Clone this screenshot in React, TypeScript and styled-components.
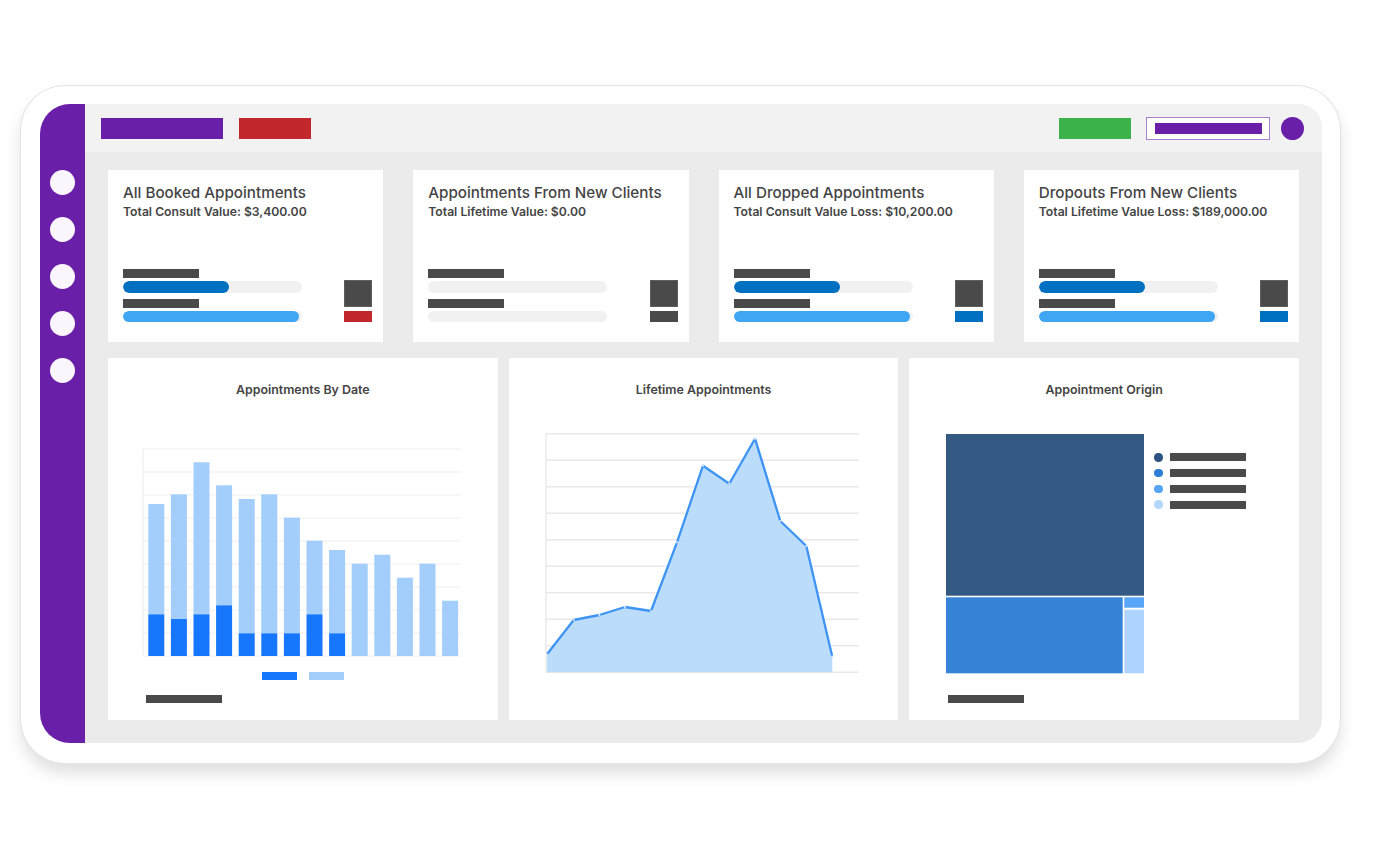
import React from 'react';
import styled, { createGlobalStyle } from 'styled-components';

const GlobalStyle = createGlobalStyle`
  html, body { margin: 0; padding: 0; background: #ffffff; }
  body { font-family: Inter, "Liberation Sans", sans-serif; -webkit-font-smoothing: antialiased; }
  #root { width: 1392px; height: 849px; }
`;

const Page = styled.div`
  width: 1392px;
  height: 849px;
  box-sizing: border-box;
  padding: 86px 0 0 21px;
  background: #ffffff;
  overflow: hidden;
`;

const Device = styled.div`
  width: 1319px;
  height: 677px;
  box-sizing: border-box;
  padding: 18px 18px 20px 19px;
  background: #ffffff;
  border-radius: 44px;
  box-shadow: 0 0 0 1px #e4e4e4, 0 10px 16px rgba(0, 0, 0, 0.13);
`;

const Screen = styled.div`
  display: flex;
  height: 100%;
  border-radius: 30px 24px 24px 30px;
  overflow: hidden;
`;

const Sidebar = styled.nav`
  width: 45px;
  flex: none;
  box-sizing: border-box;
  background: #6a1fa8;
  display: flex;
  flex-direction: column;
  align-items: center;
  padding-top: 66px;
  gap: 22px;
`;

const NavDot = styled.span`
  width: 25px;
  height: 25px;
  border-radius: 50%;
  background: #fbf6fd;
`;

const Main = styled.div`
  flex: 1;
  min-width: 0;
  display: flex;
  flex-direction: column;
  background: #ebebeb;
`;

const TopBar = styled.header`
  height: 48px;
  flex: none;
  background: #f2f2f2;
  display: flex;
  align-items: center;
  justify-content: space-between;
  padding: 0 18px 0 16px;
`;

const BarGroup = styled.div<{ $gap: number }>`
  display: flex;
  align-items: center;
  gap: ${(p) => p.$gap}px;
`;

const Block = styled.span<{ $w: number; $c: string }>`
  display: block;
  width: ${(p) => p.$w}px;
  height: 21px;
  background: ${(p) => p.$c};
`;

const OutlineButton = styled.span`
  width: 124px;
  height: 23px;
  box-sizing: border-box;
  border: 1px solid #a781d0;
  background: #ffffff;
  display: flex;
  align-items: center;
  justify-content: center;
  margin-right: -4px;
`;

const OutlineInner = styled.span`
  width: 107px;
  height: 11px;
  background: #6a1fa8;
`;

const Avatar = styled.span`
  width: 23px;
  height: 23px;
  border-radius: 50%;
  background: #6a1fa8;
`;

const Content = styled.div`
  flex: 1;
  display: flex;
  flex-direction: column;
  gap: 16px;
  padding: 18px 23px 23px 23px;
`;

const CardsRow = styled.div`
  display: grid;
  grid-template-columns: repeat(4, 1fr);
  gap: 30px;
  height: 172px;
`;

const Card = styled.section`
  background: #ffffff;
  box-sizing: border-box;
  padding: 14px 11px 20px 15px;
  display: flex;
  flex-direction: column;
  justify-content: space-between;
`;

const CardTitle = styled.h2`
  margin: 0;
  font-size: 15.2px;
  line-height: 18px;
  font-weight: 500;
  color: #444444;
  white-space: nowrap;
`;

const CardSub = styled.p`
  margin: 2px 0 0;
  font-size: 12.2px;
  line-height: 16px;
  font-weight: 600;
  color: #444444;
  white-space: nowrap;
`;

const CardBottom = styled.div`
  display: flex;
  align-items: flex-end;
  justify-content: space-between;
`;

const Meters = styled.div`
  width: 179px;
  display: flex;
  flex-direction: column;
`;

const Label = styled.span<{ $mt?: number }>`
  display: block;
  width: 76px;
  height: 9px;
  background: #4a4a4a;
  margin-top: ${(p) => p.$mt ?? 0}px;
`;

const Track = styled.div`
  margin-top: 3px;
  height: 11.5px;
  border-radius: 6px;
  background: #f1f1f1;
  overflow: hidden;
`;

const Fill = styled.div<{ $c: string }>`
  height: 100%;
  border-radius: 6px;
  background: ${(p) => p.$c};
`;

const Swatches = styled.div`
  display: flex;
  flex-direction: column;
  gap: 4px;
  width: 28px;
`;

const Square = styled.span`
  display: block;
  height: 27px;
  background: #4a4a4a;
  box-shadow: inset 0 0 0 1px #5e5e5e;
`;

const Strip = styled.span<{ $c: string }>`
  display: block;
  height: 11px;
  background: ${(p) => p.$c};
`;

const ChartsRow = styled.div`
  display: grid;
  grid-template-columns: repeat(3, 1fr);
  gap: 11px;
  flex: 1;
`;

const Panel = styled.section`
  background: #ffffff;
  padding-top: 25px;
  display: flex;
  flex-direction: column;
`;

const ChartTitle = styled.h3`
  margin: 0;
  font-size: 12.4px;
  line-height: 14px;
  font-weight: 600;
  color: #444444;
  text-align: center;
`;

const ChartSvg = styled.svg`
  display: block;
  flex: none;
`;

const LegendRow = styled.div`
  display: flex;
  justify-content: center;
  gap: 12px;
  margin-top: 13.5px;
`;

const LegendKey = styled.span<{ $c: string }>`
  width: 35px;
  height: 8px;
  background: ${(p) => p.$c};
`;

const Placeholder = styled.span<{ $mt: number; $ml: number }>`
  display: block;
  width: 76px;
  height: 8px;
  background: #4a4a4a;
  margin-top: ${(p) => p.$mt}px;
  margin-left: ${(p) => p.$ml}px;
`;

const TreeBody = styled.div`
  display: flex;
  margin-top: 37px;
  padding-left: 37px;
`;

const TreeLegend = styled.ul`
  list-style: none;
  margin: 0 0 0 10px;
  padding: 19px 0 0;
  display: flex;
  flex-direction: column;
  gap: 7.3px;
`;

const TreeItem = styled.li`
  display: flex;
  align-items: center;
  gap: 7px;
  height: 8.5px;
`;

const Dot = styled.span<{ $c: string }>`
  width: 8.5px;
  height: 8.5px;
  border-radius: 50%;
  background: ${(p) => p.$c};
`;

const ItemBar = styled.span`
  width: 76px;
  height: 8px;
  background: #4a4a4a;
`;

type CardData = {
  title: string;
  sub: string;
  fills: [number, number];
  strip: string;
};

const cards: CardData[] = [
  { title: 'All Booked Appointments', sub: 'Total Consult Value: $3,400.00', fills: [59, 98.5], strip: '#c1272d' },
  { title: 'Appointments From New Clients', sub: 'Total Lifetime Value: $0.00', fills: [0, 0], strip: '#4a4a4a' },
  { title: 'All Dropped Appointments', sub: 'Total Consult Value Loss: $10,200.00', fills: [59.5, 98.5], strip: '#0070c0' },
  { title: 'Dropouts From New Clients', sub: 'Total Lifetime Value Loss: $189,000.00', fills: [59.5, 98.5], strip: '#0070c0' },
];

const barTotals = [152, 161.7, 193.7, 170.7, 157, 161.7, 138.3, 115.3, 106, 92.3, 101.3, 78.3, 92.3, 55.3];
const barDark = [41.7, 37, 41.7, 50.7, 22.7, 22.7, 22.7, 41.7, 22.7, 0, 0, 0, 0, 0];

const linePts: [number, number][] = [
  [38, 296.3], [64.7, 262], [90.3, 257], [116, 249], [142, 253], [168, 184.3],
  [194, 107.7], [220.3, 125.7], [246, 80.7], [271.3, 163], [297.3, 188], [323.3, 298.7],
];

function BarChart() {
  const base = 298;
  return (
    <ChartSvg width={389} height={261} viewBox="0 39 389 261">
      {Array.from({ length: 10 }).map((_, i) => {
        const y = 91 + i * 23;
        return <line key={i} x1={35} x2={353} y1={y} y2={y} stroke="#efefef" strokeWidth={1.2} />;
      })}
      <line x1={35} x2={35} y1={91} y2={base} stroke="#efefef" strokeWidth={1.2} />
      {barTotals.map((h, i) => {
        const x = 40.3 + i * 22.6;
        const d = barDark[i];
        return (
          <g key={i}>
            <rect x={x} y={base - h} width={16} height={h - d} fill="#a3cdfb" />
            {d > 0 && <rect x={x} y={base - d} width={16} height={d} fill="#1677fc" />}
          </g>
        );
      })}
    </ChartSvg>
  );
}

function LineChart() {
  const base = 314.3;
  const line = linePts.map((p) => p.join(',')).join(' ');
  const area = `38,${base} ${line} 323.3,${base}`;
  return (
    <ChartSvg width={389} height={288} viewBox="0 39 389 288">
      {Array.from({ length: 10 }).map((_, i) => {
        const y = 75.7 + i * 26.51;
        return <line key={i} x1={37} x2={350} y1={y} y2={y} stroke="#e9e9e9" strokeWidth={1.4} />;
      })}
      <line x1={37} x2={37} y1={75.7} y2={base} stroke="#e9e9e9" strokeWidth={1.4} />
      <polygon points={area} fill="#bcdcfb" />
      <polyline points={line} fill="none" stroke="#3d94f4" strokeWidth={2.3} strokeLinejoin="round" />
      {linePts.map(([x, y], i) => (
        <circle key={i} cx={x} cy={y} r={1.1} fill="#dcecfd" />
      ))}
    </ChartSvg>
  );
}

function TreeMap() {
  return (
    <ChartSvg width={198} height={240} viewBox="0 0 198 240">
      <rect x={0} y={0} width={198} height={161.7} fill="#345a84" />
      <rect x={0} y={163.3} width={176.7} height={76} fill="#3583d6" />
      <rect x={178.3} y={163.3} width={19.7} height={10.4} fill="#58a6f8" />
      <rect x={178.3} y={175.7} width={19.7} height={63.6} fill="#aed3fc" />
    </ChartSvg>
  );
}

export default function App() {
  return (
    <>
      <GlobalStyle />
      <Page>
        <Device>
          <Screen>
            <Sidebar>
              {[0, 1, 2, 3, 4].map((i) => (
                <NavDot key={i} />
              ))}
            </Sidebar>
            <Main>
              <TopBar>
                <BarGroup $gap={16}>
                  <Block $w={122} $c="#6a1fa8" />
                  <Block $w={72} $c="#c1272d" />
                </BarGroup>
                <BarGroup $gap={15}>
                  <Block $w={72} $c="#3bb34a" />
                  <OutlineButton>
                    <OutlineInner />
                  </OutlineButton>
                  <Avatar />
                </BarGroup>
              </TopBar>
              <Content>
                <CardsRow>
                  {cards.map((c) => (
                    <Card key={c.title}>
                      <div>
                        <CardTitle>{c.title}</CardTitle>
                        <CardSub>{c.sub}</CardSub>
                      </div>
                      <CardBottom>
                        <Meters>
                          <Label />
                          <Track>
                            <Fill $c="#0070c0" style={{ width: `${c.fills[0]}%` }} />
                          </Track>
                          <Label $mt={6} />
                          <Track>
                            <Fill $c="#3ea6f2" style={{ width: `${c.fills[1]}%` }} />
                          </Track>
                        </Meters>
                        <Swatches>
                          <Square />
                          <Strip $c={c.strip} />
                        </Swatches>
                      </CardBottom>
                    </Card>
                  ))}
                </CardsRow>
                <ChartsRow>
                  <Panel>
                    <ChartTitle>Appointments By Date</ChartTitle>
                    <BarChart />
                    <LegendRow>
                      <LegendKey $c="#1677fc" />
                      <LegendKey $c="#a3cdfb" />
                    </LegendRow>
                    <Placeholder $mt={15} $ml={38} />
                  </Panel>
                  <Panel>
                    <ChartTitle>Lifetime Appointments</ChartTitle>
                    <LineChart />
                  </Panel>
                  <Panel>
                    <ChartTitle>Appointment Origin</ChartTitle>
                    <TreeBody>
                      <TreeMap />
                      <TreeLegend>
                        {['#2c5282', '#2f7dd6', '#57a5f7', '#b3d6fb'].map((c) => (
                          <TreeItem key={c}>
                            <Dot $c={c} />
                            <ItemBar />
                          </TreeItem>
                        ))}
                      </TreeLegend>
                    </TreeBody>
                    <Placeholder $mt={21} $ml={39} />
                  </Panel>
                </ChartsRow>
              </Content>
            </Main>
          </Screen>
        </Device>
      </Page>
    </>
  );
}
